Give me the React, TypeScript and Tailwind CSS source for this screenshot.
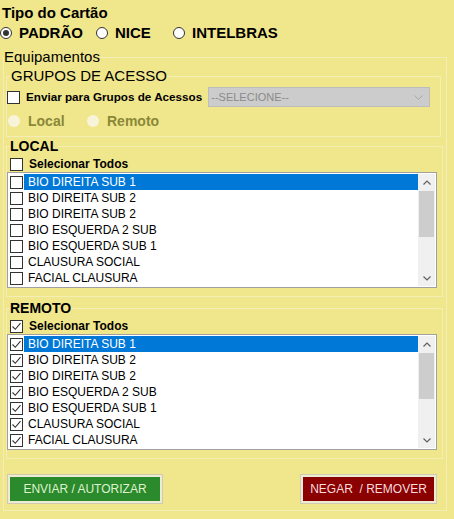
import React from "react";

const items = [
  "BIO DIREITA SUB 1",
  "BIO DIREITA SUB 2",
  "BIO DIREITA SUB 2",
  "BIO ESQUERDA 2 SUB",
  "BIO ESQUERDA SUB 1",
  "CLAUSURA SOCIAL",
  "FACIAL CLAUSURA",
];

function Check({ checked }: { checked?: boolean }) {
  return (
    <span className="w-[13px] h-[13px] border border-[#333333] bg-white flex items-center justify-center shrink-0">
      {checked && (
        <svg width="11" height="11" viewBox="0 0 11 11">
          <path d="M1.5 5.5 L4.3 8.3 L9.5 2.2" fill="none" stroke="#333333" strokeWidth="1.1" />
        </svg>
      )}
    </span>
  );
}

function Radio({ checked, disabled }: { checked?: boolean; disabled?: boolean }) {
  return (
    <span
      className={
        disabled
          ? "w-[12px] h-[12px] rounded-full bg-[#f8f4da] shrink-0"
          : "w-[12px] h-[12px] rounded-full bg-white border border-[#333333] flex items-center justify-center shrink-0"
      }
    >
      {checked && <span className="w-[6px] h-[6px] rounded-full bg-[#333333]" />}
    </span>
  );
}

function Chevron({ up }: { up?: boolean }) {
  return (
    <svg width="8" height="5" viewBox="0 0 8 5">
      <path
        d={up ? "M0.5 4.5 L4 1 L7.5 4.5" : "M0.5 0.5 L4 4 L7.5 0.5"}
        fill="none"
        stroke="#606060"
        strokeWidth="1.2"
      />
    </svg>
  );
}

function ListBox({ checked }: { checked?: boolean }) {
  return (
    <div className="w-[430px] h-[116px] border border-[#a0a0a0] bg-white flex p-[1px]">
      <div className="w-[409px] flex flex-col">
        {items.map((t, i) => (
          <div key={i} className="h-[16px] flex items-center">
            <span className="ml-[1px]">
              <Check checked={checked} />
            </span>
            <div
              className={
                i === 0
                  ? "ml-[1px] flex-1 h-[16px] flex items-center pl-[4px] bg-[#0078d7] text-white"
                  : "ml-[1px] flex-1 h-[16px] flex items-center pl-[4px] text-black"
              }
            >
              <span className="text-[12px] leading-[16px]">{t}</span>
            </div>
          </div>
        ))}
      </div>
      <div className="w-[17px] h-[112px] bg-[#f0f0f0] flex flex-col">
        <div className="h-[16px] flex items-center justify-center">
          <Chevron up />
        </div>
        <div className="flex-1">
          <div className="mt-[1px] mx-[1px] h-[46px] bg-[#cdcdcd]" />
        </div>
        <div className="h-[16px] flex items-center justify-center">
          <Chevron />
        </div>
      </div>
    </div>
  );
}

export default function App() {
  return (
    <div className="w-[454px] h-[519px] bg-[#f0e68c] overflow-hidden text-black font-['Liberation_Sans',Arial,sans-serif]">
      <div className="pl-[2px] pt-[4px] text-[15px] font-bold leading-[18px]">Tipo do Cartão</div>
      <div className="mt-[2px] h-[18px] flex items-center text-[15px] font-bold leading-[18px]">
        <div className="w-[96px] flex items-center">
          <Radio checked />
          <span className="ml-[7px]">PADRÃO</span>
        </div>
        <div className="w-[77px] flex items-center">
          <Radio />
          <span className="ml-[7px]">NICE</span>
        </div>
        <div className="flex items-center">
          <Radio />
          <span className="ml-[7px]">INTELBRAS</span>
        </div>
      </div>

      <fieldset className="ml-[3px] mt-[6px] w-[444px] border border-[#f5eeb4] pb-[6px]">
        <legend className="ml-[0px] text-[15px] leading-[18px]">Equipamentos</legend>

        <fieldset className="ml-[2px] mt-[1px] w-[435px] border border-[#f5eeb4] pb-[7px]">
          <legend className="ml-[4px] text-[15px] leading-[18px]">GRUPOS DE ACESSO</legend>
          <div className="mt-[2px] h-[20px] flex items-center">
            <Check />
            <span className="ml-[6px] text-[11.7px] font-bold leading-[14px]">Enviar para Grupos de Acessos</span>
            <div className="ml-[6px] w-[222px] h-[20px] bg-[#cccccc] border border-[#bdbdbd] flex items-center justify-between pl-[2px] pr-[6px]">
              <span className="text-[11px] text-[#8a8a8a] leading-[14px]">--SELECIONE--</span>
              <svg width="9" height="5" viewBox="0 0 9 5">
                <path d="M0.5 0.5 L4.5 4.3 L8.5 0.5" fill="none" stroke="#a8a8a8" strokeWidth="1" />
              </svg>
            </div>
          </div>
          <div className="mt-[6px] h-[16px] flex items-center text-[14px] font-bold text-[#8a8838] leading-[16px]">
            <div className="ml-[1px] w-[79px] flex items-center">
              <Radio disabled />
              <span className="ml-[8px]">Local</span>
            </div>
            <div className="flex items-center">
              <Radio disabled />
              <span className="ml-[8px]">Remoto</span>
            </div>
          </div>
        </fieldset>

        <fieldset className="ml-[2px] mt-[1px] w-[437px] border border-[#f5eeb4] pb-[8px]">
          <legend className="ml-[3px] text-[14px] font-bold leading-[17px]">LOCAL</legend>
          <div className="mt-[1px] h-[16px] flex items-center pl-[3px]">
            <Check />
            <span className="ml-[6px] text-[12px] font-bold leading-[14px]">Selecionar Todos</span>
          </div>
          <ListBox />
        </fieldset>

        <fieldset className="ml-[2px] mt-[3px] w-[437px] border border-[#f5eeb4] pb-[8px]">
          <legend className="ml-[3px] text-[14px] font-bold leading-[17px]">REMOTO</legend>
          <div className="mt-[1px] h-[16px] flex items-center pl-[3px]">
            <Check checked />
            <span className="ml-[6px] text-[12px] font-bold leading-[14px]">Selecionar Todos</span>
          </div>
          <ListBox checked />
        </fieldset>

        <div className="mt-[15px] flex justify-between pl-[3px] pr-[9px]">
          <button className="w-[156px] h-[30px] border border-[#cfcab0] bg-[#eeebd4] p-[2px] flex">
            <span className="flex-1 bg-[#2b8a2b] flex items-center justify-center text-[12px] text-[#dff2cf]">
              ENVIAR / AUTORIZAR
            </span>
          </button>
          <button className="w-[137px] h-[30px] border border-[#cfcab0] bg-[#eeebd4] p-[2px] flex">
            <span className="flex-1 bg-[#8b0000] flex items-center justify-center text-[12px] text-[#f3dcdc] whitespace-pre">
              NEGAR  / REMOVER
            </span>
          </button>
        </div>
      </fieldset>
    </div>
  );
}
